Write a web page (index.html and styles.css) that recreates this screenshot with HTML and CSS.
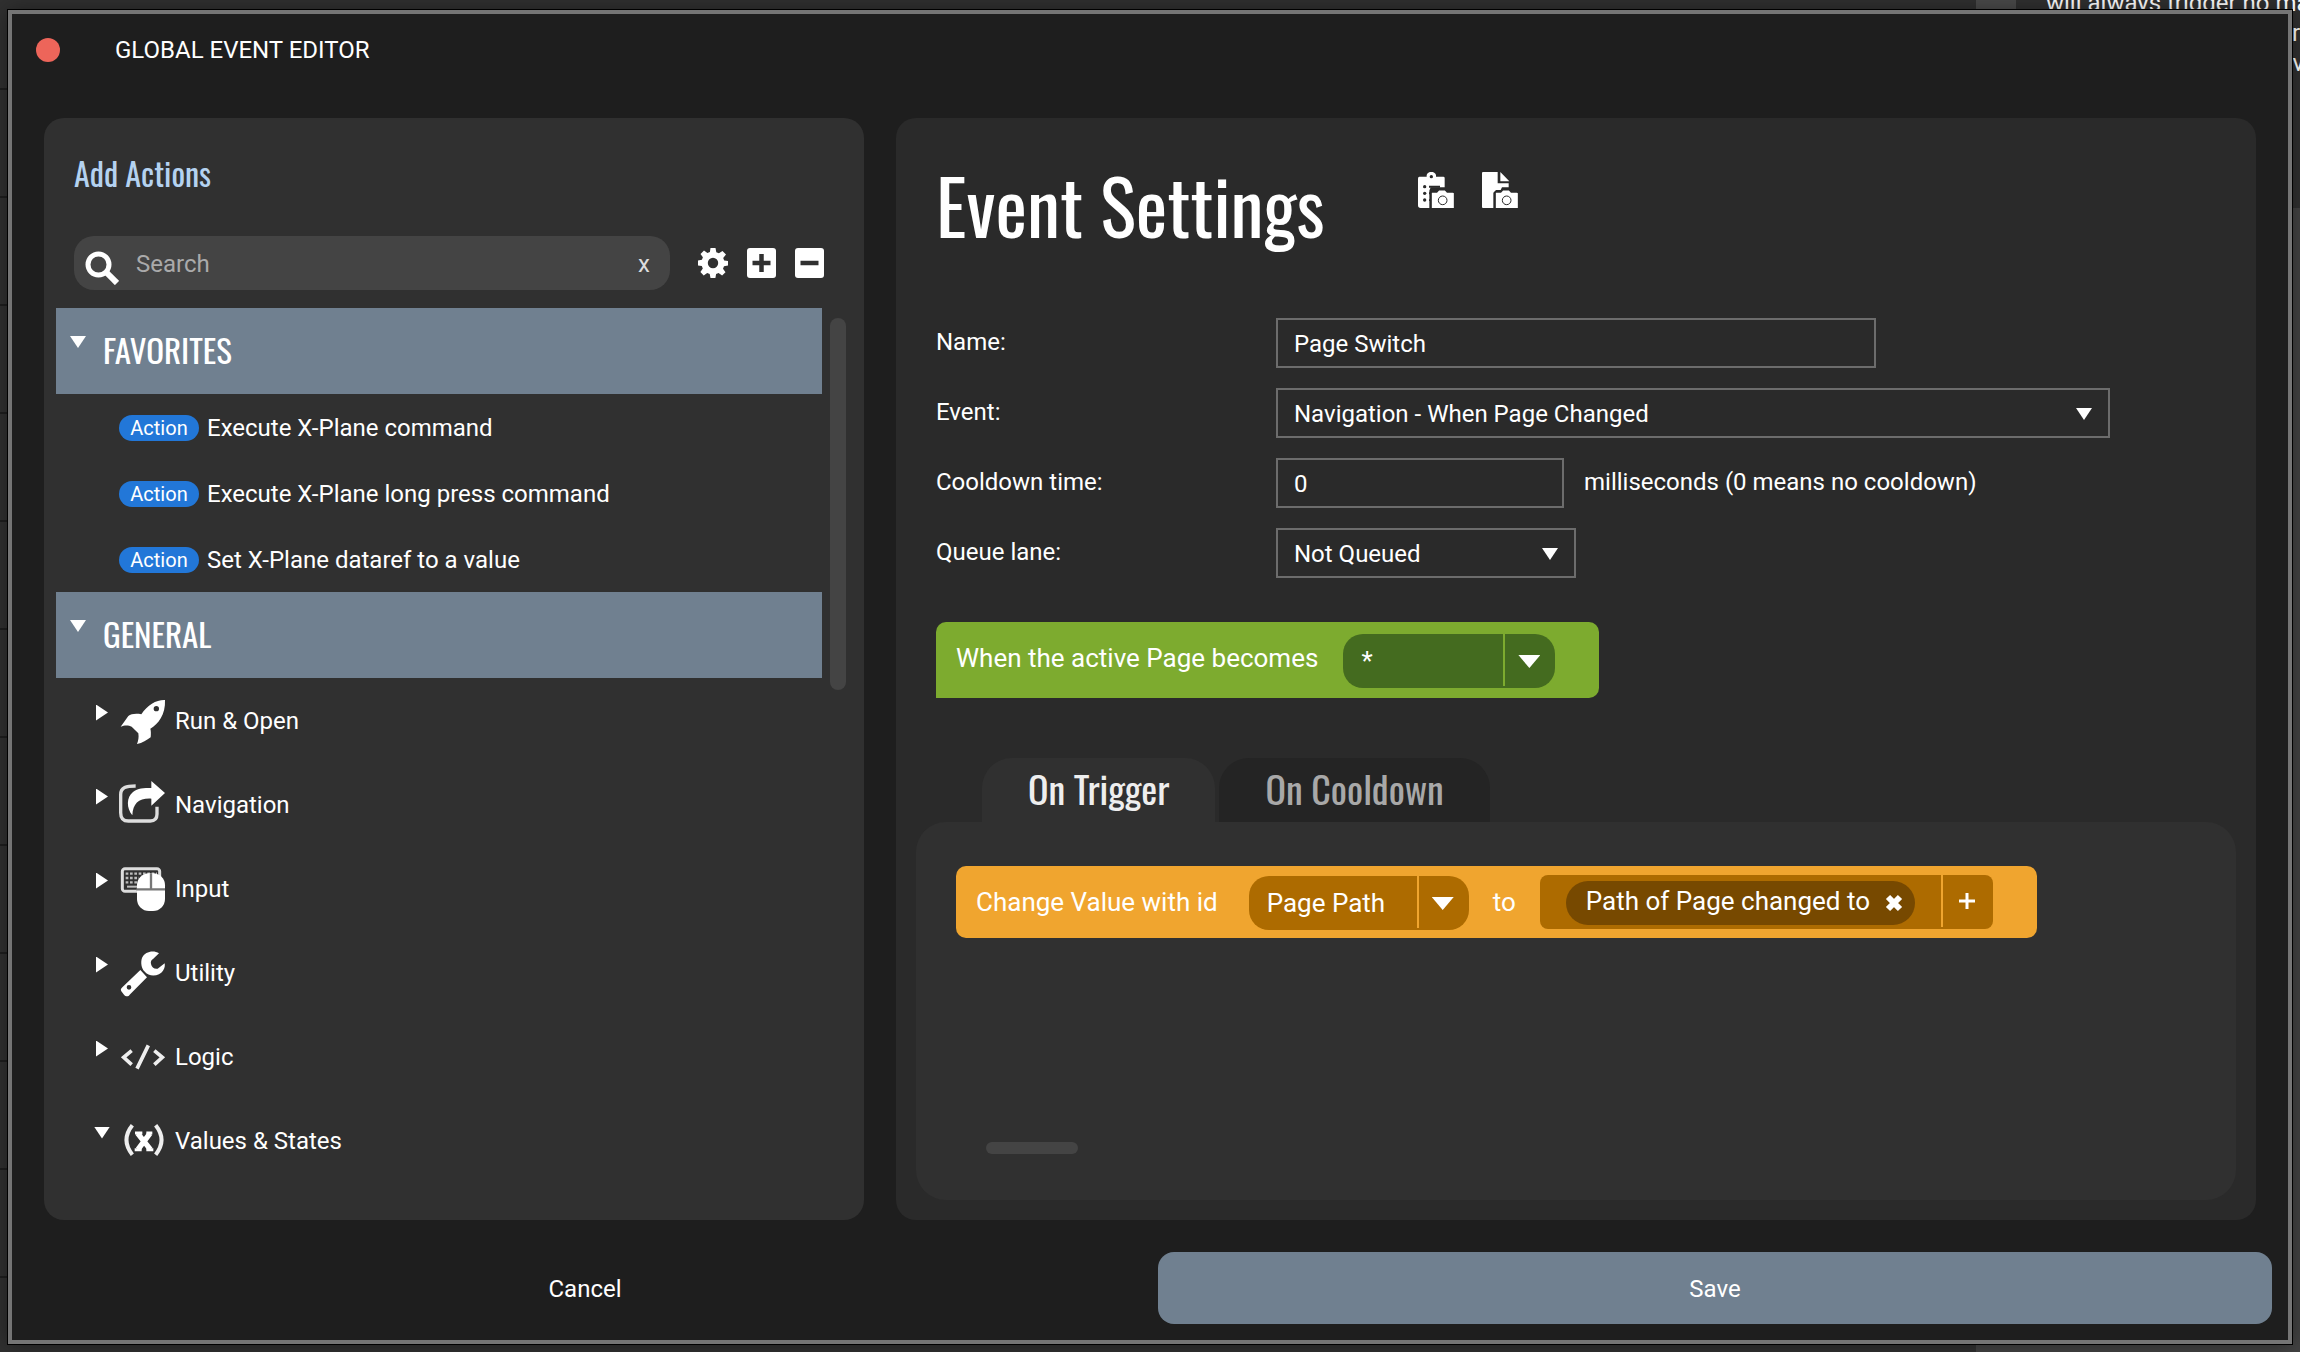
FILE: index.html
```html
<!DOCTYPE html>
<html lang="en">
<head>
<meta charset="utf-8">
<title>Global Event Editor</title>
<link rel="stylesheet" href="styles.css">
</head>
<body>
<div class="backdrop">
  <div class="backdrop-list"></div>
  <aside class="backdrop-side">
    <div class="backdrop-note">
      <div class="backdrop-thumb"></div>
      <div class="backdrop-text">
        <p>will always trigger no ma</p>
        <p class="line-short">r</p>
        <p class="line-long">ev</p>
      </div>
    </div>
  </aside>
</div>

<div class="dialog" role="dialog" aria-labelledby="dialog-title">
  <header class="titlebar">
    <button class="close-dot" type="button" aria-label="Close"></button>
    <h1 class="dialog-title" id="dialog-title">GLOBAL EVENT EDITOR</h1>
  </header>

  <main class="columns">
    <section class="panel actions">
      <h2 class="actions-title">Add Actions</h2>
      <div class="toolbar">
        <div class="search">
          <svg class="search-icon" viewBox="0 0 34 34" aria-hidden="true"><circle cx="13.500" cy="13.500" r="10.500" fill="none" stroke="#fff" stroke-width="5"/><path d="M21 21L32 32" stroke="#fff" stroke-width="6"/></svg>
          <input class="search-input" type="text" placeholder="Search" aria-label="Search">
          <button class="search-clear" type="button" aria-label="Clear search">x</button>
        </div>
        <button class="tool" type="button" aria-label="Settings">
          <svg viewBox="0 0 30 30"><path fill="#fff" fill-rule="evenodd" d="M12.500 0h5l.8 4.200 2.600 1.100L24.500 3 28 6.500 25.200 10l1 2.500 3.800.5v4.500l-4 .8-1 2.500 2.500 3.400-3.400 3.300-3.500-2.400-2.500 1-.7 3.900h-4.900l-.8-4-2.500-1.100-3.500 2.500-3.300-3.300 2.400-3.500-1-2.500L0 17.500v-5l3.900-.7 1-2.500L2.500 6 6 2.600 9.400 5l2.500-1zM15 9.800a5.200 5.200 0 1 0 0 10.400 5.200 5.200 0 0 0 0-10.400z"/></svg>
        </button>
        <button class="tool" type="button" aria-label="Expand all">
          <svg viewBox="0 0 30 30"><rect x="1" y="0" width="29" height="30" rx="3" fill="#fff"/><path d="M15.500 6v18M6.500 15h18" stroke="#303030" stroke-width="4.500"/></svg>
        </button>
        <button class="tool" type="button" aria-label="Collapse all">
          <svg viewBox="0 0 30 30"><rect x="1" y="0" width="29" height="30" rx="3" fill="#fff"/><path d="M6.500 15h18" stroke="#303030" stroke-width="4.500"/></svg>
        </button>
      </div>

      <div class="list-wrap">
        <div class="list">
          <details open>
            <summary class="group-head"><span class="arrow arrow-down"></span>FAVORITES</summary>
            <ul class="action-list">
              <li class="action-row"><span class="badge">Action</span>Execute X-Plane command</li>
              <li class="action-row"><span class="badge">Action</span>Execute X-Plane long press command</li>
              <li class="action-row"><span class="badge">Action</span>Set X-Plane dataref to a value</li>
            </ul>
          </details>
          <details open>
            <summary class="group-head"><span class="arrow arrow-down"></span>GENERAL</summary>
            <details>
              <summary class="category"><span class="arrow arrow-right"></span>
                <svg class="category-icon" viewBox="0 0 138 138"><path fill="#fff" fill-rule="evenodd" d="M138 6C112 5 86 20 67 49C50 46 36 48 28 54L5 86C18 80 30 82 38 86L58 106C60 118 58 128 54 138C70 136 84 126 95 118C96 108 96 98 94 92C118 78 140 50 138 6zM112 24a8 8 0 1 0 0 16a8 8 0 0 0 0-16z"/></svg>
                Run &amp; Open</summary>
            </details>
            <details>
              <summary class="category"><span class="arrow arrow-right"></span>
                <svg class="category-icon" viewBox="0 0 138 138"><path fill="none" stroke="#ddd" stroke-width="10" d="M50 12C22 12 5 16 5 38V92C5 108 12 117 28 117H94C108 117 114 108 114 96V74"/><path fill="#fff" d="M97-3L138 33L97 71V50C60 48 42 64 40 100C22 78 22 46 42 30C56 19 74 18 97 18z"/></svg>
                Navigation</summary>
            </details>
            <details>
              <summary class="category"><span class="arrow arrow-right"></span>
                <svg class="category-icon" viewBox="0 0 138 138"><rect x="10" y="8" width="112" height="68" rx="8" fill="none" stroke="#ddd" stroke-width="9"/><path d="M20 23H114M20 36H60M20 49H56" stroke="#bbb" stroke-width="7" stroke-dasharray="8 5"/><path d="M24 62H54" stroke="#bbb" stroke-width="6"/><rect x="54" y="22" width="84" height="113" rx="36" fill="#fff"/><path d="M96 22V70M52 70H138" stroke="#777" stroke-width="7"/></svg>
                Input</summary>
            </details>
            <details>
              <summary class="category"><span class="arrow arrow-right"></span>
                <svg class="category-icon" viewBox="0 0 138 138"><path fill="#fff" d="M120 10C104 0 78 4 69 24C64 38 68 56 76 64C92 84 122 78 132 62C138 54 138 46 137 40L116 56C106 58 98 52 96 42C94 34 98 30 102 27z"/><path fill="#fff" fill-rule="evenodd" d="M64 60L84 82L32 134C28 141 20 140 15 134L7 124C4 119 6 116 10 112zM30 105a7 7 0 1 0 0 14a7 7 0 0 0 0-14z"/></svg>
                Utility</summary>
            </details>
            <details>
              <summary class="category"><span class="arrow arrow-right"></span>
                <svg class="category-icon" viewBox="0 0 138 138"><path fill="none" stroke="#eee" stroke-width="11" d="M38 50L14 70L38 92M106 50L130 70L106 92M88 34L54 104"/></svg>
                Logic</summary>
            </details>
            <details open>
              <summary class="category"><span class="arrow arrow-down"></span>
                <svg class="category-icon" viewBox="0 0 138 138"><path fill="none" stroke="#eee" stroke-width="12" d="M40 22C16 52 16 80 40 110M110 22C134 52 134 80 110 110"/><path fill="none" stroke="#fff" stroke-width="16" d="M56 46L94 94M93 46L57 94"/><path fill="none" stroke="#fff" stroke-width="9" d="M48 45H70M82 45H100M47 95H68M82 95H103"/></svg>
                Values &amp; States</summary>
            </details>
          </details>
        </div>
        <div class="scroll-thumb"></div>
      </div>
    </section>

    <section class="panel settings">
      <header class="settings-head">
        <h2 class="settings-title">Event Settings</h2>
        <div class="snapshots">
          <button class="snapshot" type="button" aria-label="Copy snapshot to clipboard">
            <svg viewBox="0 0 108 108"><path fill="#fff" d="M4 14H26V10C28-4 52-4 54 10V14H76Q80 14 80 18V46H38L34 56V108H8Q0 108 0 100V20Q0 14 4 14z"/><g fill="#2a2a2a"><circle cx="40" cy="14" r="5"/><circle cx="20" cy="44" r="5"/><circle cx="20" cy="64" r="5"/><circle cx="20" cy="84" r="5"/><path d="M33 41H66V47H33zM33 61H42V67H33zM33 82H38V87H33z"/></g><path fill="#fff" stroke="#2a2a2a" stroke-width="5" d="M42 60H56L62 53H82L88 60H104Q110 60 110 64V112H39V64Q39 60 42 60z"/><circle cx="74" cy="85" r="13" fill="none" stroke="#2a2a2a" stroke-width="3"/></svg>
          </button>
          <button class="snapshot" type="button" aria-label="Save snapshot to file">
            <svg viewBox="0 0 108 108"><path fill="#fff" d="M3 0H47V34H80V46H60L56 54H42L34 62V108H3Q0 108 0 105V3Q0 0 3 0zM55 0L82 28H55z"/><path fill="#fff" stroke="#2a2a2a" stroke-width="5" d="M42 60H56L62 53H82L88 60H104Q110 60 110 64V112H39V64Q39 60 42 60z"/><circle cx="74" cy="85" r="13" fill="none" stroke="#2a2a2a" stroke-width="3"/></svg>
          </button>
        </div>
      </header>

      <form class="form">
        <label for="name">Name:</label>
        <div class="field"><input class="box box-name" id="name" type="text" value="Page Switch"></div>
        <label for="event">Event:</label>
        <div class="field"><span class="select box-event"><select class="box" id="event"><option>Navigation - When Page Changed</option></select></span></div>
        <label for="cooldown">Cooldown time:</label>
        <div class="field"><input class="box box-cooldown" id="cooldown" type="text" value="0"><span class="hint">milliseconds (0 means no cooldown)</span></div>
        <label for="queue">Queue lane:</label>
        <div class="field"><span class="select box-queue"><select class="box" id="queue"><option>Not Queued</option></select></span></div>
      </form>

      <div class="block block-event">
        <label class="block-label" for="page">When the active Page becomes</label>
        <span class="pill"><input class="pill-input" id="page" type="text" value="*"><button class="pill-button" type="button" aria-label="Choose page"><span class="caret"></span></button></span>
      </div>

      <div class="tabs" role="tablist">
        <button class="tab tab-active" type="button" role="tab" aria-selected="true">On Trigger</button>
        <button class="tab" type="button" role="tab" aria-selected="false">On Cooldown</button>
      </div>
      <div class="tab-panel" role="tabpanel">
        <div class="block block-action">
          <label for="value-id">Change Value with id</label>
          <span class="pill"><input class="pill-input pill-wide" id="value-id" type="text" value="Page Path"><button class="pill-button" type="button" aria-label="Choose value"><span class="caret"></span></button></span>
          <span>to</span>
          <span class="slot">
            <span class="chip"><span class="chip-text">Path of Page changed to</span>
              <button class="chip-remove" type="button" aria-label="Remove"><svg viewBox="0 0 18 18"><path d="M3 3L15 15M15 3L3 15" stroke="#fff" stroke-width="6"/></svg></button>
            </span>
            <button class="pill-button" type="button" aria-label="Add"><svg class="plus" viewBox="0 0 16 16"><path d="M8 0V16M0 8H16" stroke="#fff" stroke-width="3"/></svg></button>
          </span>
        </div>
        <div class="h-thumb"></div>
      </div>
    </section>
  </main>

  <footer class="footer">
    <button class="foot-button" type="button">Cancel</button>
    <button class="foot-button foot-primary" type="button">Save</button>
  </footer>
</div>
</body>
</html>
```

FILE: styles.css
```css
* { box-sizing: border-box; }

html, body { height: 100%; }

body {
  margin: 0;
  overflow: hidden;
  background: #303030;
  color: #fff;
  font-family: Roboto, sans-serif;
  font-size: 24px;
  line-height: 30px;
}

h1, h2, p, ul { margin: 0; padding: 0; font-weight: 400; }

button, input, select {
  margin: 0;
  padding: 0;
  border: 0;
  background: none;
  color: inherit;
  font: inherit;
}

button { cursor: pointer; }
svg { display: block; }

/* Application behind the dialog */
.backdrop {
  display: flex;
  justify-content: space-between;
  height: 100%;
  overflow: hidden;
}

.backdrop-list {
  width: 100px;
  background: repeating-linear-gradient(#303030 0 106px, #1e1e1e 106px 108px);
  background-position: 0 -18px;
}

.backdrop-side {
  width: 324px;
  overflow: hidden;
  background: #424242;
}

.backdrop-note {
  display: flex;
  gap: 30px;
  height: 208px;
  background: #303030;
}

.backdrop-thumb {
  flex: none;
  width: 40px;
  height: 40px;
  background: #4a4a4a;
}

.backdrop-text {
  flex: 1;
  margin-top: -12px;
  white-space: nowrap;
}

.line-short { padding-left: 246px; }
.line-long { padding-left: 234px; }

/* Dialog frame */
.dialog {
  position: absolute;
  inset: 10px 8px 8px;
  display: flex;
  flex-direction: column;
  border: 4px solid #757575;
  outline: 1px solid #000;
  background: #1e1e1e;
  box-shadow: 0 0 20px rgba(0, 0, 0, 0.4);
}

.titlebar {
  display: flex;
  align-items: center;
  gap: 55px;
  height: 104px;
  padding: 0 24px 32px;
}

.close-dot {
  width: 24px;
  height: 24px;
  border-radius: 50%;
  background: #ed655a;
}

.dialog-title { font-size: 24px; }

.columns {
  flex: 1;
  display: grid;
  grid-template-columns: minmax(0, 41fr) minmax(0, 68fr);
  gap: 32px;
  min-height: 0;
  padding: 0 32px;
}

.panel {
  display: flex;
  flex-direction: column;
  min-height: 0;
  border-radius: 20px;
}

/* Left panel */
.actions {
  padding: 31px 18px 30px 12px;
  background: #303030;
}

.actions-title {
  margin-left: 18px;
  color: #b4d2f0;
  font-family: Oswald, "Roboto Condensed", sans-serif;
  font-size: 32px;
  line-height: 48px;
}

.toolbar {
  display: flex;
  align-items: center;
  gap: 18px;
  margin: 39px 22px 18px 18px;
}

.search {
  flex: 1;
  display: flex;
  align-items: center;
  height: 54px;
  margin-right: 10px;
  padding: 0 16px 0 11px;
  border-radius: 20px;
  background: #444;
}

.search-icon { width: 34px; height: 34px; margin-top: 10px; }

.search-input {
  flex: 1;
  min-width: 0;
  margin-left: 17px;
  padding-top: 2px;
  outline: 0;
}

.search-input::placeholder { color: #aaa; opacity: 1; }
.search-clear { width: 20px; padding-top: 2px; color: #ddd; }
.tool { width: 30px; height: 30px; }

.list-wrap {
  flex: 1;
  display: flex;
  gap: 8px;
  min-height: 0;
}

.list { flex: 1; overflow: hidden; }

.scroll-thumb {
  width: 16px;
  height: 372px;
  margin-top: 10px;
  border-radius: 8px;
  background: #444;
}

summary {
  display: flex;
  align-items: center;
  list-style: none;
  cursor: pointer;
}

.group-head {
  height: 86px;
  padding: 0 14px 2px;
  gap: 17px;
  background: #708090;
  font-family: Oswald, "Roboto Condensed", sans-serif;
  font-size: 33px;
}

.arrow { flex: none; width: 16px; margin-bottom: 16px; }

.arrow::before {
  content: "";
  display: block;
  width: 16px;
  height: 12px;
  background: #fff;
  clip-path: polygon(0 0, 100% 0, 50% 100%);
}

.arrow-right::before {
  width: 12px;
  height: 16px;
  margin-left: 2px;
  clip-path: polygon(0 0, 100% 50%, 0 100%);
}

.action-list { list-style: none; }

.action-row {
  display: flex;
  align-items: center;
  gap: 8px;
  height: 66px;
  padding: 1px 0 0 63px;
}

.badge {
  width: 80px;
  border-radius: 13px;
  background: #2277d8;
  font-size: 20px;
  line-height: 26px;
  text-align: center;
}

.category {
  height: 84px;
  padding: 1px 0 0 38px;
}

.category-icon {
  width: 46px;
  height: 46px;
  margin: 0 10px 0 9px;
  overflow: visible;
}

/* Right panel */
.settings {
  padding: 0 20px 20px;
  background: #2a2a2a;
}

.settings-head {
  display: flex;
  gap: 93px;
  height: 200px;
  padding: 37px 20px 0;
}

.settings-title {
  font-family: Oswald, "Roboto Condensed", sans-serif;
  font-size: 75px;
  line-height: 100px;
}

.snapshots { display: flex; gap: 28px; padding-top: 17px; }
.snapshot { width: 36px; height: 36px; }

.form {
  display: grid;
  grid-template-columns: 340px minmax(0, 1fr);
  row-gap: 20px;
  align-items: center;
  margin: 0 20px;
}

.form label, .hint { padding-bottom: 2px; }

.field { display: flex; align-items: center; gap: 20px; }

.box {
  height: 50px;
  padding: 2px 16px 0;
  border: 2px solid #6c6c6c;
  border-radius: 0;
}

select.box { appearance: none; width: 100%; }
option { background: #2a2a2a; }

.box-name { width: 600px; }
.box-event { width: 834px; }
.box-cooldown { width: 288px; }
.box-queue { width: 300px; }

.select { position: relative; }

.select::after {
  content: "";
  position: absolute;
  top: 20px;
  right: 18px;
  width: 16px;
  height: 12px;
  background: #fff;
  clip-path: polygon(0 0, 100% 0, 50% 100%);
  pointer-events: none;
}

/* Blocks */
.block {
  align-self: flex-start;
  display: flex;
  align-items: center;
  padding: 0 44px 0 20px;
  border-radius: 10px;
  font-size: 26px;
  white-space: nowrap;
}

.block-event {
  gap: 25px;
  height: 76px;
  margin: 44px 20px 60px;
  border-bottom-left-radius: 0;
  background: #7dab2f;
}

.block-event .block-label { padding-bottom: 4px; }

.block-action {
  gap: 24px;
  height: 72px;
  background: #f0a52f;
}

.block-action label { margin-right: 7px; }

.pill, .slot {
  display: flex;
  height: 54px;
}

.pill { margin-top: 2px; border-radius: 20px; }
.block-event .pill { background: #446b1f; }
.block-action .pill, .slot { background: #ad6b00; }

.pill-input {
  width: 160px;
  padding-left: 18px;
  outline: 0;
}

.pill-wide { width: 168px; }

.pill-button {
  display: flex;
  align-items: center;
  justify-content: center;
  width: 52px;
  height: 52px;
  padding-right: 2px;
  border-left: 2px solid #f0a52f;
}

.block-event .pill-button { border-color: #7dab2f; }

.caret {
  width: 22px;
  height: 13px;
  margin-top: 3px;
  background: #fff;
  clip-path: polygon(0 0, 100% 0, 50% 100%);
}

.slot {
  padding-left: 26px;
  border-radius: 8px;
}

.chip {
  display: flex;
  align-items: center;
  gap: 15px;
  height: 44px;
  margin: 6px 26px 0 0;
  padding: 0 12px 0 20px;
  border-radius: 22px;
  background: #774900;
}

.chip-text { padding-bottom: 4px; }
.chip-remove, .chip-remove svg { width: 18px; height: 18px; }
.plus { width: 16px; height: 16px; }

/* Tabs */
.tabs {
  display: flex;
  gap: 4px;
  padding-left: 66px;
}

.tab {
  height: 64px;
  padding: 0 46px 4px;
  border-radius: 30px 30px 0 0;
  background: #242424;
  color: #a8a8a8;
  font-family: Oswald, "Roboto Condensed", sans-serif;
  font-size: 38px;
}

.tab-active { background: #303030; color: #eee; }

.tab-panel {
  flex: 1;
  display: flex;
  flex-direction: column;
  justify-content: space-between;
  padding: 44px 40px 46px;
  border-radius: 30px;
  background: #303030;
}

.h-thumb {
  width: 92px;
  height: 12px;
  margin-left: 30px;
  border-radius: 6px;
  background: #444;
}

/* Footer */
.footer {
  display: grid;
  grid-template-columns: 1fr 1fr;
  gap: 16px;
  padding: 32px 16px 16px;
}

.foot-button { height: 72px; padding-top: 2px; border-radius: 16px; }
.foot-primary { background: #708090; }
```
